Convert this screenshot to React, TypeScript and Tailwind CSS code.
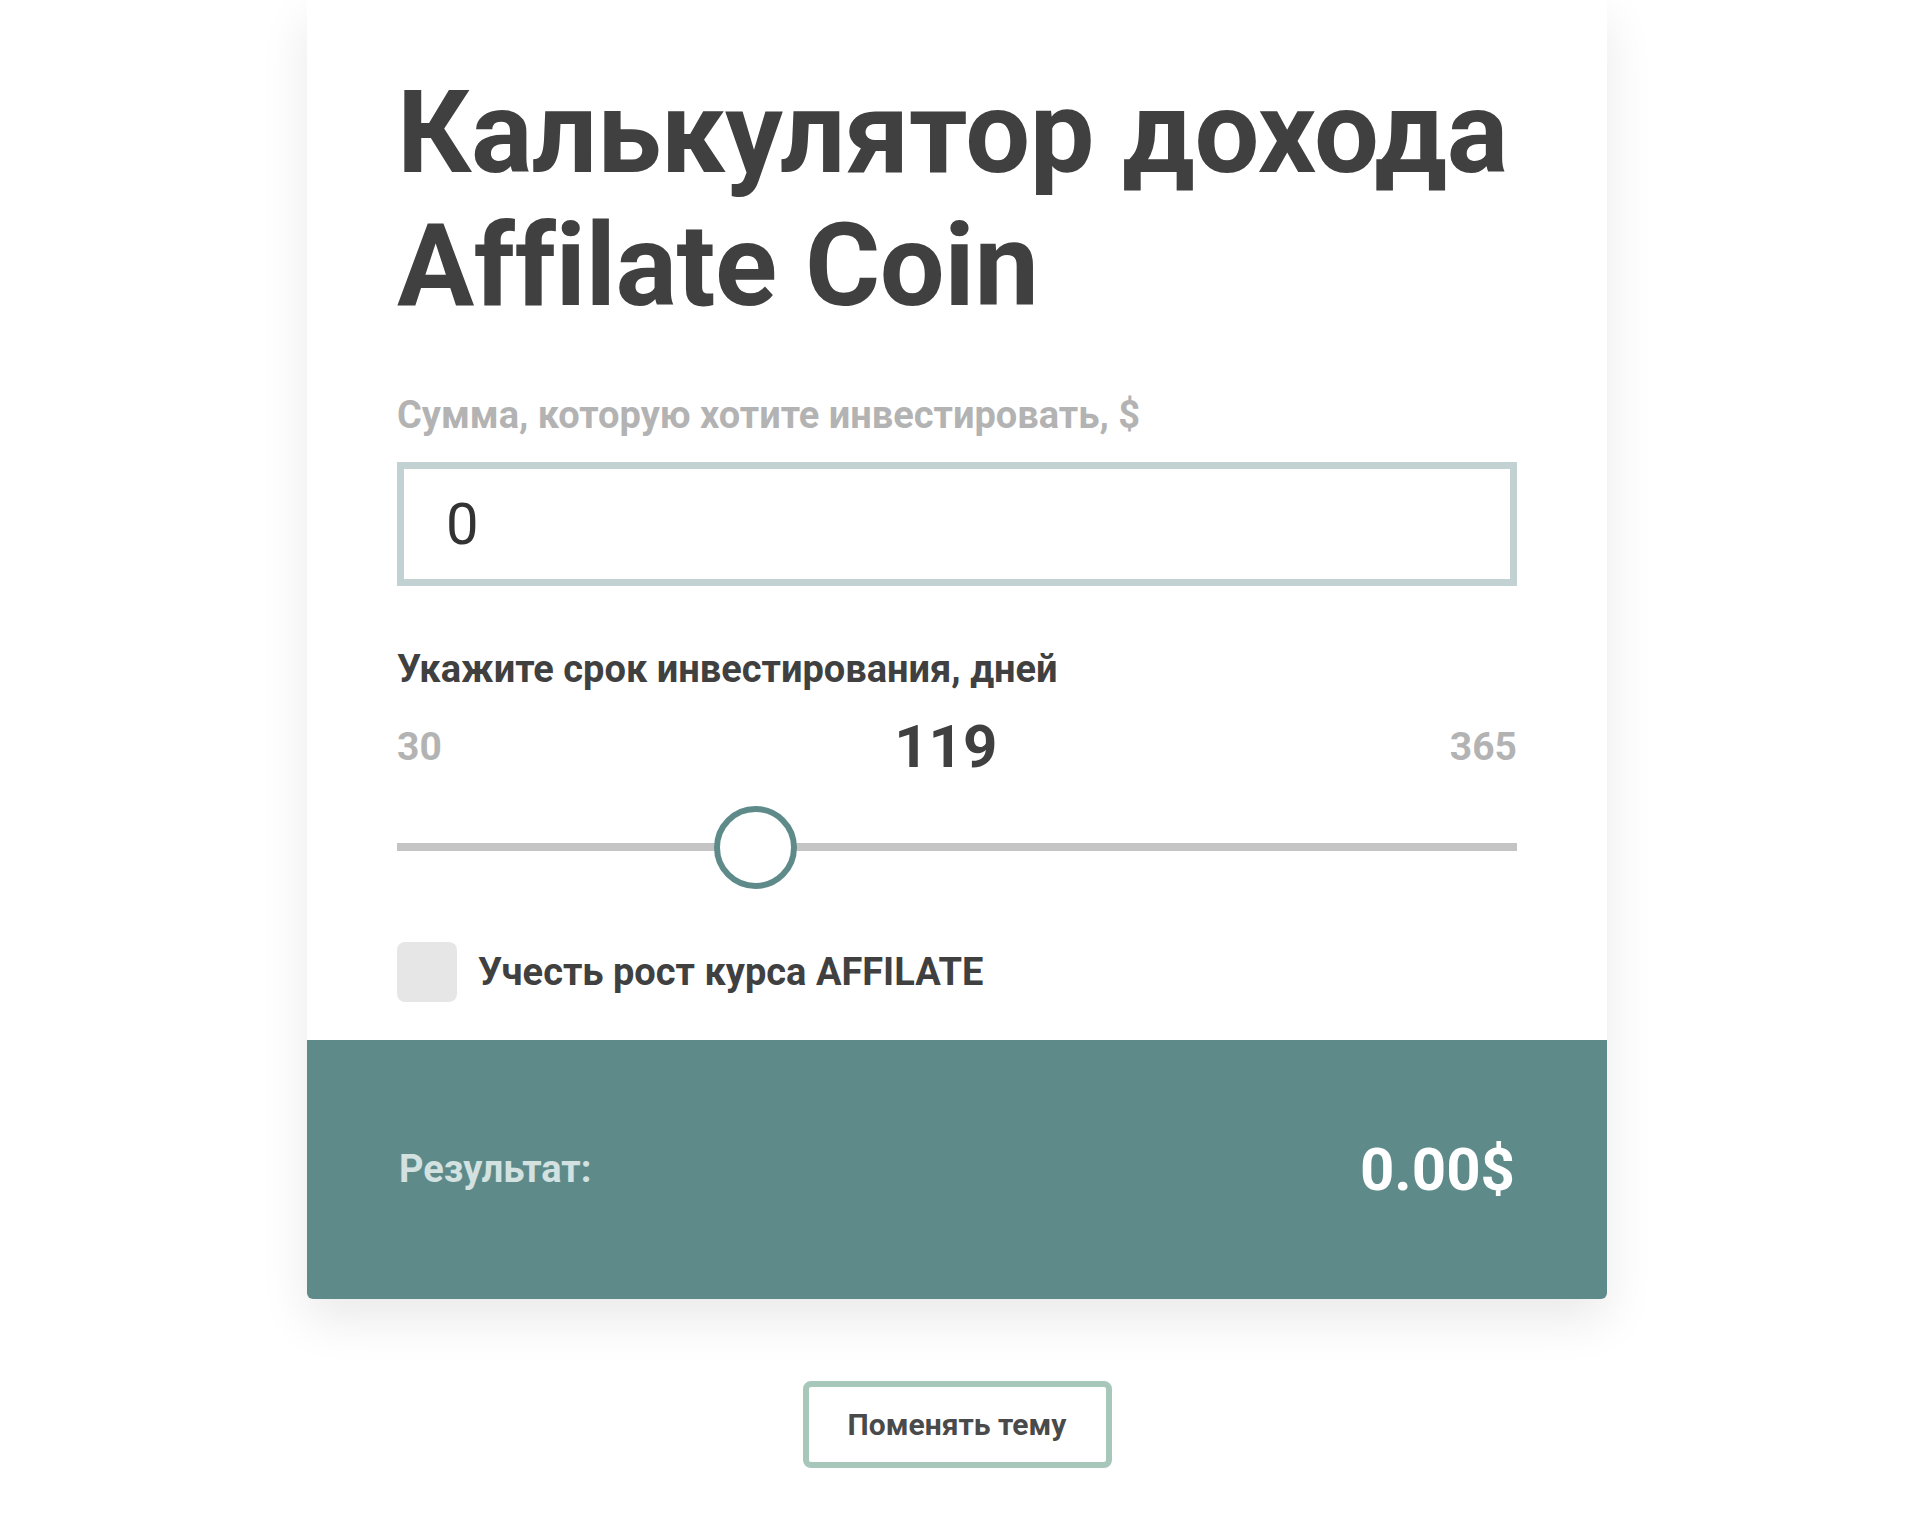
import React from "react";

export default function App() {
  const min = 30;
  const max = 365;
  const value = 119;
  return (
    <div
      className="min-h-[1532px] w-full bg-white"
      style={{ fontFamily: "Roboto, 'Noto Sans', sans-serif" }}
    >
      <div className="mx-auto w-[1300px] rounded-b-[6px] bg-white shadow-[0_20px_50px_rgba(0,0,0,0.09)]">
        <div className="px-[90px] pt-[66px] pb-[38px]">
          <h1 className="text-[115px] font-bold leading-[133px] tracking-[-0.4px] text-[#404040]">
            Калькулятор дохода
            <br />
            Affilate Coin
          </h1>
          <div className="mt-[61px] text-[38px] font-bold leading-[44px] text-[#b3b3b3]">
            Сумма, которую хотите инвестировать, $
          </div>
          <div className="mt-[25px] flex h-[124px] items-center border-[7px] border-[#c2d1d2] bg-white px-[42px]">
            <span className="text-[58px] leading-none text-[#333333]">0</span>
          </div>
          <div className="mt-[61px] text-[38px] font-bold leading-[44px] text-[#404040]">
            Укажите срок инвестирования, дней
          </div>
          <div className="mt-[21px] flex items-center justify-between">
            <span className="text-[39px] font-bold leading-[50px] text-[#b3b3b3]">{min}</span>
            <span className="text-[60px] font-bold leading-[70px] text-[#404040]">{value}</span>
            <span className="text-[39px] font-bold leading-[50px] text-[#b3b3b3]">{max}</span>
          </div>
          <div className="relative mt-[24px] h-[83px]">
            <div className="absolute left-0 right-0 top-[37px] h-[8px] bg-[#c4c4c4]" />
            <div className="absolute left-[317px] top-0 h-[83px] w-[83px] rounded-full border-[6px] border-[#5e8b8a] bg-white" />
          </div>
          <div className="mt-[53px] flex items-center gap-[21px]">
            <div className="h-[60px] w-[60px] rounded-[8px] bg-[#e6e6e6]" />
            <span className="text-[38px] font-bold leading-[44px] text-[#404040]">
              Учесть рост курса AFFILATE
            </span>
          </div>
        </div>
        <div className="flex h-[259px] items-center justify-between rounded-b-[6px] bg-[#5e8b8a] px-[92px]">
          <span className="text-[38px] font-bold text-[#d3e2e1]">Результат:</span>
          <span className="text-[60px] font-bold text-white">0.00$</span>
        </div>
      </div>
      <div className="mt-[82px] flex justify-center">
        <button className="h-[87px] w-[309px] rounded-[8px] border-[6px] border-[#a7c7bb] bg-white text-[30px] font-bold text-[#4a4a4a]">
          Поменять тему
        </button>
      </div>
    </div>
  );
}
